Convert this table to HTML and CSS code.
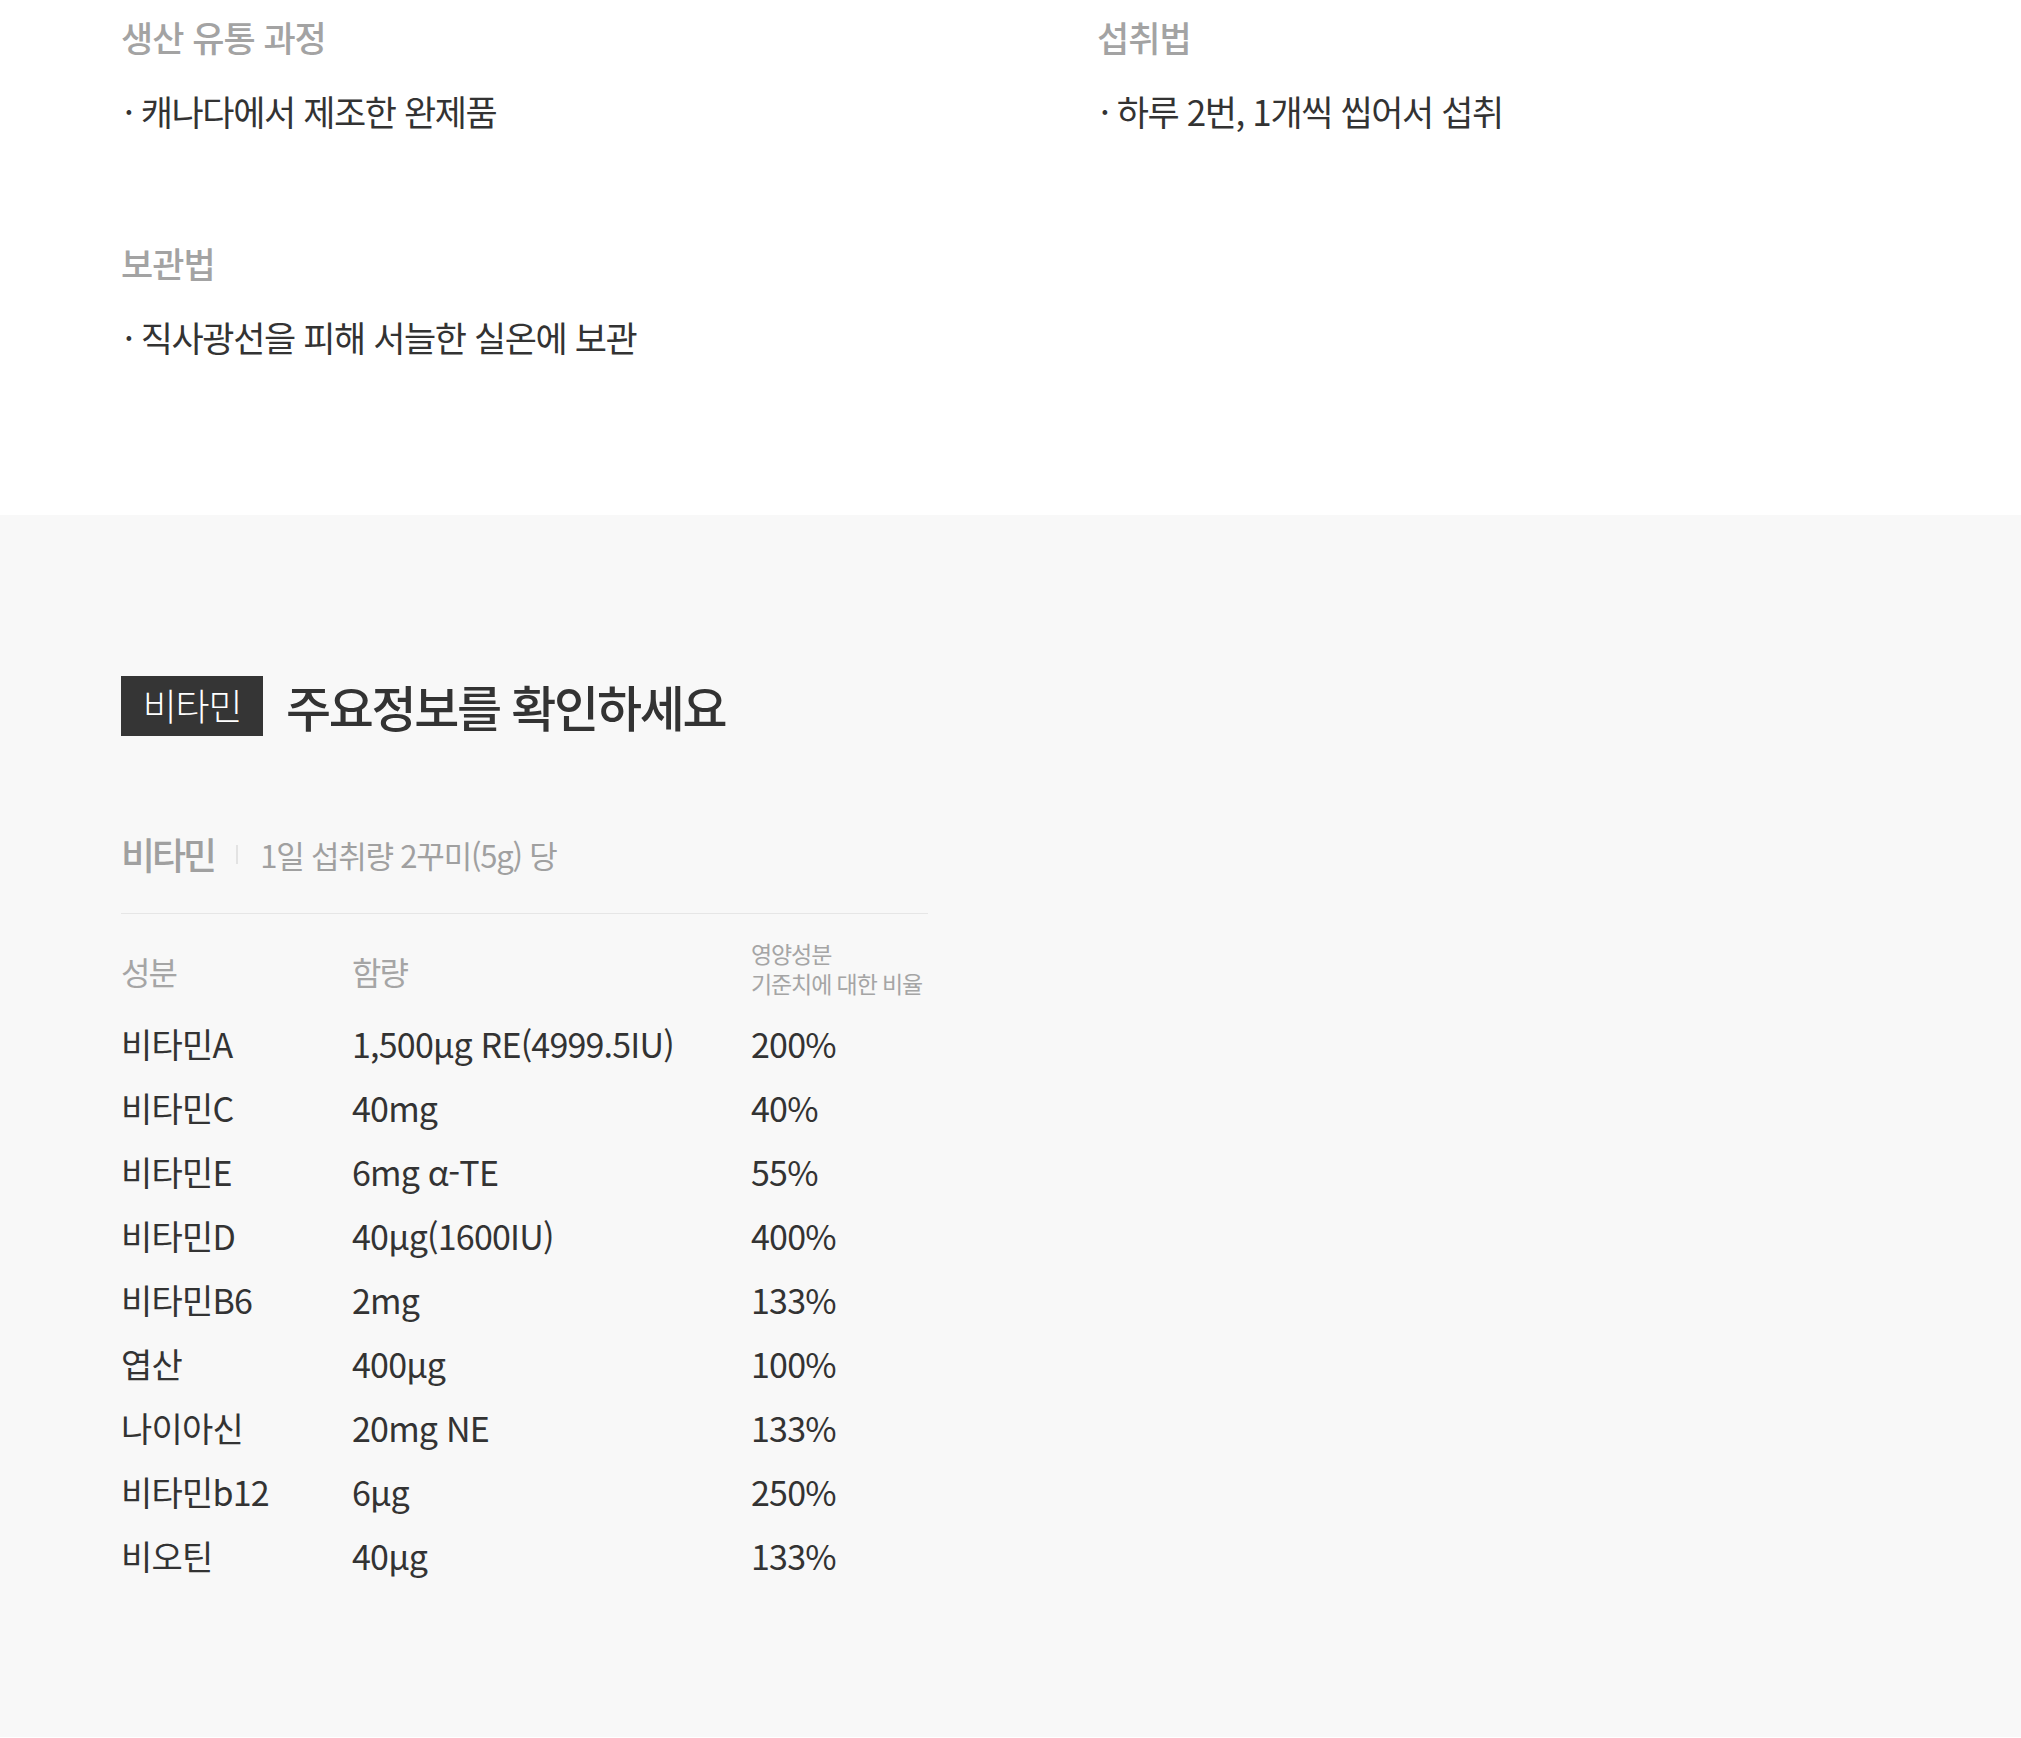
FILE: index.html
```html
<!DOCTYPE html>
<html lang="ko">
<head>
<meta charset="utf-8">
<title>비타민 주요정보</title>
<link rel="stylesheet" href="styles.css">
</head>
<body>
<div class="info">
  <div class="info-grid">
    <section class="info-block">
      <h3 class="info-head">생산 유통 과정</h3>
      <p class="info-text">· 캐나다에서 제조한 완제품</p>
    </section>
    <section class="info-block">
      <h3 class="info-head">섭취법</h3>
      <p class="info-text">· 하루 2번, 1개씩 씹어서 섭취</p>
    </section>
    <section class="info-block">
      <h3 class="info-head">보관법</h3>
      <p class="info-text">· 직사광선을 피해 서늘한 실온에 보관</p>
    </section>
  </div>
</div>
<div class="nutri">
  <div class="nutri-title">
    <span class="tag">비타민</span>
    <h2 class="title">주요정보를 확인하세요</h2>
  </div>
  <div class="sub">
    <strong class="sub-name">비타민</strong>
    <span class="sep"></span>
    <span class="sub-desc">1일 섭취량 2꾸미(5g) 당</span>
  </div>
  <div class="ntable">
    <div class="nrow nhead">
      <span class="hcell">성분</span>
      <span class="hcell">함량</span>
      <span class="hcell small">영양성분<br>기준치에 대한 비율</span>
    </div>
    <div class="nbody">
      <div class="nrow"><span>비타민A</span><span>1,500µg RE(4999.5IU)</span><span>200%</span></div>
      <div class="nrow"><span>비타민C</span><span>40mg</span><span>40%</span></div>
      <div class="nrow"><span>비타민E</span><span>6mg α-TE</span><span>55%</span></div>
      <div class="nrow"><span>비타민D</span><span>40µg(1600IU)</span><span>400%</span></div>
      <div class="nrow"><span>비타민B6</span><span>2mg</span><span>133%</span></div>
      <div class="nrow"><span>엽산</span><span>400µg</span><span>100%</span></div>
      <div class="nrow"><span>나이아신</span><span>20mg NE</span><span>133%</span></div>
      <div class="nrow"><span>비타민b12</span><span>6µg</span><span>250%</span></div>
      <div class="nrow"><span>비오틴</span><span>40µg</span><span>133%</span></div>
    </div>
  </div>
</div>
</body>
</html>
```

FILE: styles.css
```css
* { box-sizing: border-box; }
html, body {
  margin: 0;
  padding: 0;
  background: #fff;
  font-family: "Noto Sans CJK KR", "Noto Sans", sans-serif;
  color: #333;
}
.info {
  padding: 17px 0 158px 121px;
}
.info-grid {
  display: grid;
  grid-template-columns: 976px 1fr;
  row-gap: 112px;
}
.info-head {
  margin: 0;
  font-size: 35px;
  line-height: 40px;
  font-weight: 500;
  color: #a3a3a3;
  letter-spacing: -1px;
}
.info-text {
  margin: 34px 0 0;
  padding-left: 3px;
  font-size: 35px;
  line-height: 40px;
  font-weight: 400;
  color: #333;
  letter-spacing: -1.4px;
}
.nutri {
  background: #f8f8f8;
  padding: 161px 0 120px 121px;
  min-height: 1222px;
}
.nutri-title {
  display: flex;
  align-items: center;
  gap: 23px;
}
.tag {
  display: flex;
  align-items: center;
  justify-content: center;
  width: 142px;
  height: 60px;
  background: #353535;
  color: #fff;
  font-size: 37px;
  font-weight: 300;
  letter-spacing: -1.2px;
  padding-bottom: 2px;
}
.title {
  margin: 0;
  font-size: 49px;
  line-height: 60px;
  font-weight: 500;
  letter-spacing: -2.3px;
  color: #333;
}
.sub {
  display: flex;
  align-items: center;
  margin-top: 98px;
  height: 40px;
  color: #a0a0a0;
}
.sub-name {
  font-size: 37px;
  font-weight: 500;
  letter-spacing: -3px;
}
.sep {
  width: 2px;
  height: 19px;
  background: #e3e3e3;
  margin: 0 22px 0 22px;
}
.sub-desc {
  font-size: 31px;
  letter-spacing: -1.2px;
}
.ntable {
  width: 807px;
  margin-top: 39px;
  border-top: 1px solid #e6e6e6;
}
.nrow {
  display: grid;
  grid-template-columns: 231px 399px 1fr;
  align-items: center;
}
.nhead {
  padding-top: 24px;
  color: #a5a5a5;
}
.hcell {
  font-size: 32px;
  letter-spacing: -2px;
  line-height: 40px;
  padding-top: 6px;
}
.hcell.small {
  font-size: 23px;
  letter-spacing: -1.1px;
  line-height: 30px;
  padding-top: 0;
}
.nbody {
  margin-top: 13px;
}
.nbody .nrow {
  height: 64px;
  font-size: 34px;
  letter-spacing: -0.8px;
  color: #333;
}
```
